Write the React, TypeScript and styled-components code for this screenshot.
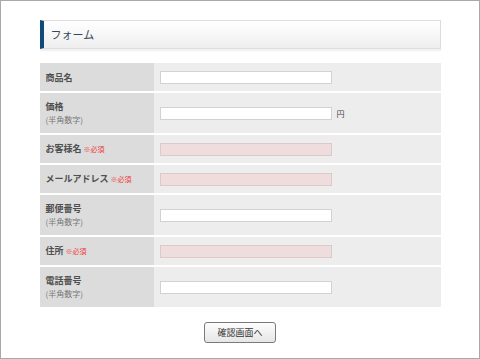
import React from 'react';
import styled, { createGlobalStyle } from 'styled-components';

const GlobalStyle = createGlobalStyle`
  html, body {
    margin: 0;
    padding: 0;
    background: #fff;
  }
  body {
    font-family: "Noto Sans CJK JP", "Noto Sans", sans-serif;
  }
`;

type Field = {
  label: string;
  sub?: string;
  required?: boolean;
  unit?: string;
};

const fields: Field[] = [
  { label: '商品名' },
  { label: '価格', sub: '(半角数字)', unit: '円' },
  { label: 'お客様名', required: true },
  { label: 'メールアドレス', required: true },
  { label: '郵便番号', sub: '(半角数字)' },
  { label: '住所', required: true },
  { label: '電話番号', sub: '(半角数字)' },
];

export default function App() {
  return (
    <>
      <GlobalStyle />
      <StyledFrame>
        <StyledContent>
          <StyledHeading>フォーム</StyledHeading>
          <StyledTable>
            {fields.map(({ label, sub, required, unit }) => (
              <StyledRow key={label} tall={!!sub}>
                <StyledLabelCell>
                  <StyledLabel>
                    {label}
                    {required && <StyledRequired>※必須</StyledRequired>}
                  </StyledLabel>
                  {sub && <StyledSub>{sub}</StyledSub>}
                </StyledLabelCell>
                <StyledValueCell>
                  <StyledInput type="text" required={required} />
                  {unit && <StyledUnit>{unit}</StyledUnit>}
                </StyledValueCell>
              </StyledRow>
            ))}
          </StyledTable>
          <StyledActions>
            <StyledButton type="button">確認画面へ</StyledButton>
          </StyledActions>
        </StyledContent>
      </StyledFrame>
    </>
  );
}

const StyledFrame = styled.div`
  box-sizing: border-box;
  width: 480px;
  height: 359px;
  border: 1px solid #a9a9a9;
  overflow: hidden;
`;

const StyledContent = styled.div`
  width: 401px;
  margin: 0 auto;
  padding-top: 19px;
`;

const StyledHeading = styled.h2`
  box-sizing: border-box;
  margin: 0;
  height: 29px;
  padding: 0 0 1px 7px;
  display: flex;
  align-items: center;
  font-size: 11px;
  font-weight: normal;
  color: #34485c;
  background: linear-gradient(#ffffff, #eeeeee);
  border: 1px solid #dddddd;
  border-left: 4px solid #0e4a7a;
  box-shadow: 0 2px 1px #f2f2f2;
`;

const StyledTable = styled.div`
  margin-top: 14px;
  display: flex;
  flex-direction: column;
  gap: 2px;
`;

const StyledRow = styled.div<{ tall: boolean }>`
  display: grid;
  grid-template-columns: 114px 1fr;
  height: ${({ tall }) => (tall ? '40px' : '28px')};
`;

const StyledLabelCell = styled.div`
  background: #dcdcdc;
  padding-left: 6px;
  display: flex;
  flex-direction: column;
  justify-content: center;
`;

const StyledLabel = styled.span`
  font-size: 9px;
  font-weight: bold;
  color: #4f4f4f;
  line-height: 13px;
`;

const StyledRequired = styled.span`
  margin-left: 2px;
  font-size: 7px;
  font-weight: normal;
  color: #f0383d;
`;

const StyledSub = styled.span`
  font-size: 8px;
  color: #777777;
  line-height: 13px;
`;

const StyledValueCell = styled.div`
  background: #ededed;
  padding-left: 6px;
  display: flex;
  align-items: center;
`;

const StyledInput = styled.input`
  box-sizing: border-box;
  width: 172px;
  height: 13px;
  margin: 0;
  padding: 0 3px;
  border: 1px solid #d2d2d2;
  background: ${({ required }) => (required ? '#efdcdc' : '#ffffff')};
  border-color: ${({ required }) => (required ? '#dccaca' : '#d2d2d2')};
  outline: none;
`;

const StyledUnit = styled.span`
  margin-left: 5px;
  font-size: 8px;
  color: #444444;
`;

const StyledActions = styled.div`
  display: flex;
  justify-content: center;
  margin-top: 15px;
`;

const StyledButton = styled.button`
  box-sizing: border-box;
  width: 72px;
  height: 21px;
  padding: 0;
  font-family: "Noto Sans CJK JP", "Noto Sans", sans-serif;
  font-size: 9px;
  color: #333333;
  border: 1px solid #7a7a7a;
  border-radius: 3px;
  background: linear-gradient(#fdfdfd, #e6e6e6);
  cursor: pointer;
`;
